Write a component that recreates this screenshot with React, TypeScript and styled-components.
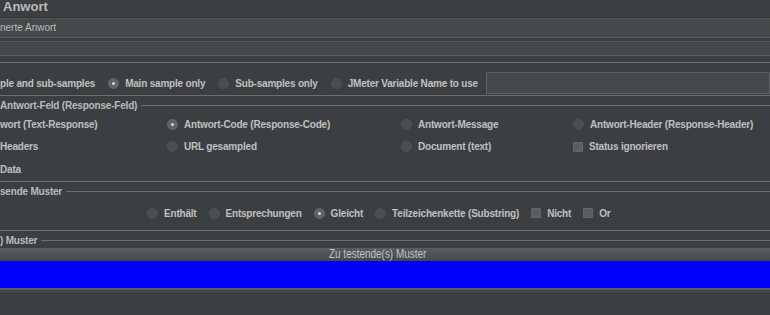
import styled, { createGlobalStyle } from "styled-components";

const LINE = "#6b6d6f";

const GlobalStyle = createGlobalStyle`
  html, body {
    margin: 0;
    padding: 0;
    background: #3c3f41;
  }
`;

const Page = styled.div`
  width: 770px;
  height: 315px;
  overflow: hidden;
  background: #3c3f41;
  color: #bbbbbb;
  font-family: "Liberation Sans", Arial, sans-serif;
  font-size: 10px;
`;

const TitleBar = styled.div`
  height: 17px;
  border-bottom: 1px solid #313335;
  padding-left: 3px;
  font-size: 13px;
  font-weight: bold;
  line-height: 14px;
  white-space: nowrap;
`;

const Field = styled.div<{ $h: number; $mt?: number }>`
  box-sizing: border-box;
  height: ${(p) => p.$h}px;
  margin-top: ${(p) => p.$mt ?? 0}px;
  background: #45494a;
  border-top: 1px solid #55585a;
  border-bottom: 1px solid #5e6163;
  line-height: ${(p) => p.$h - 2}px;
  white-space: nowrap;
`;

const Group = styled.section<{ $mt: number; $ruled?: boolean; $open?: boolean }>`
  margin-top: ${(p) => p.$mt}px;
  border-top: ${(p) => (p.$ruled ? `1px solid ${LINE}` : "none")};
  border-bottom: ${(p) => (p.$open ? "none" : `1px solid ${LINE}`)};
`;

const GroupHead = styled.div`
  display: flex;
  align-items: center;
  height: 13px;
  font-weight: bold;
  letter-spacing: -0.2px;
  white-space: nowrap;

  &::after {
    content: "";
    flex: 1;
    height: 1px;
    background: ${LINE};
    margin-left: 4px;
  }
`;

const OptionRow = styled.div<{ $pt: number; $pb: number; $pl: number; $gap: number }>`
  display: flex;
  align-items: center;
  height: 22px;
  padding: ${(p) => `${p.$pt}px 0 ${p.$pb}px ${p.$pl}px`};
  gap: ${(p) => p.$gap}px;
  white-space: nowrap;
`;

const VarGroup = styled.div`
  display: flex;
  align-items: center;
  flex: 1;
  gap: 8px;
`;

const FieldGrid = styled.div`
  display: grid;
  grid-template-columns: 167px 234px 172px 1fr;
  grid-template-rows: 22px 23px 22px;
  align-items: center;
  padding: 1px 0 1px;
  white-space: nowrap;
`;

const Option = styled.label`
  display: flex;
  align-items: center;
  gap: 6px;
`;

const Label = styled.span`
  font-weight: bold;
  letter-spacing: -0.2px;
  color: #c0c0c0;
`;

const Radio = styled.span<{ $on?: boolean }>`
  box-sizing: border-box;
  width: 11px;
  height: 11px;
  flex: none;
  border-radius: 50%;
  display: grid;
  place-items: center;
  background: ${(p) => (p.$on ? "#5f6365" : "#4b4e50")};
  border: 1px solid ${(p) => (p.$on ? "#676a6c" : "#505355")};

  &::after {
    content: "";
    display: ${(p) => (p.$on ? "block" : "none")};
    width: 3px;
    height: 3px;
    border-radius: 50%;
    background: #d6d6d6;
  }
`;

const Check = styled.span`
  box-sizing: border-box;
  width: 10px;
  height: 10px;
  flex: none;
  border-radius: 1px;
  background: #5b5e60;
  border: 1px solid #65686a;
`;

const VarField = styled.div`
  box-sizing: border-box;
  flex: 1;
  height: 22px;
  background: #45494a;
  border: 1px solid #5e6163;
`;

const TableHead = styled.div`
  box-sizing: border-box;
  height: 13px;
  margin-top: 1px;
  padding-right: 14px;
  background: linear-gradient(#5b5e60, #45484a);
  text-align: center;
  font-size: 12px;
  line-height: 13px;
  color: #c4c4c4;
  white-space: nowrap;
`;

const Condensed = styled.span`
  display: inline-block;
  transform: scaleX(0.83);
`;

const PatternRow = styled.div`
  height: 27px;
  background: #0000ff;
  border-bottom: 2px solid #5b5d5f;
`;

const ScrollEdge = styled.div`
  margin-top: 1px;
  border-top: 1px solid #4a4d4f;
`;

function RadioOption(props: { label: string; on?: boolean }) {
  return (
    <Option>
      <Radio $on={props.on} />
      <Label>{props.label}</Label>
    </Option>
  );
}

function CheckOption(props: { label: string }) {
  return (
    <Option>
      <Check />
      <Label>{props.label}</Label>
    </Option>
  );
}

export default function App() {
  return (
    <Page>
      <GlobalStyle />
      <TitleBar>Anwort</TitleBar>
      <Field $h={20}>nerte Anwort</Field>
      <Field $h={15} $mt={3} />

      {/* Apply to */}
      <Group $mt={6} $ruled>
        <OptionRow $pt={9} $pb={1} $pl={0} $gap={13}>
          <Label>ple and sub-samples</Label>
          <RadioOption label="Main sample only" on />
          <RadioOption label="Sub-samples only" />
          <VarGroup>
            <RadioOption label="JMeter Variable Name to use" />
            <VarField />
          </VarGroup>
        </OptionRow>
      </Group>

      {/* Response field to test */}
      <Group $mt={3}>
        <GroupHead>Antwort-Feld (Response-Feld)</GroupHead>
        <FieldGrid>
          <Label>wort (Text-Response)</Label>
          <RadioOption label="Antwort-Code (Response-Code)" on />
          <RadioOption label="Antwort-Message" />
          <RadioOption label="Antwort-Header (Response-Header)" />

          <Label>Headers</Label>
          <RadioOption label="URL gesampled" />
          <RadioOption label="Document (text)" />
          <CheckOption label="Status ignorieren" />

          <Label>Data</Label>
        </FieldGrid>
      </Group>

      {/* Pattern matching rules */}
      <Group $mt={3}>
        <GroupHead>sende Muster</GroupHead>
        <OptionRow $pt={4} $pb={6} $pl={147} $gap={12}>
          <RadioOption label="Enthält" />
          <RadioOption label="Entsprechungen" />
          <RadioOption label="Gleicht" on />
          <RadioOption label="Teilzeichenkette (Substring)" />
          <CheckOption label="Nicht" />
          <CheckOption label="Or" />
        </OptionRow>
      </Group>

      {/* Patterns to test */}
      <Group $mt={3} $open>
        <GroupHead>) Muster</GroupHead>
        <TableHead>
          <Condensed>Zu testende(s) Muster</Condensed>
        </TableHead>
        <PatternRow />
        <ScrollEdge />
      </Group>
    </Page>
  );
}
